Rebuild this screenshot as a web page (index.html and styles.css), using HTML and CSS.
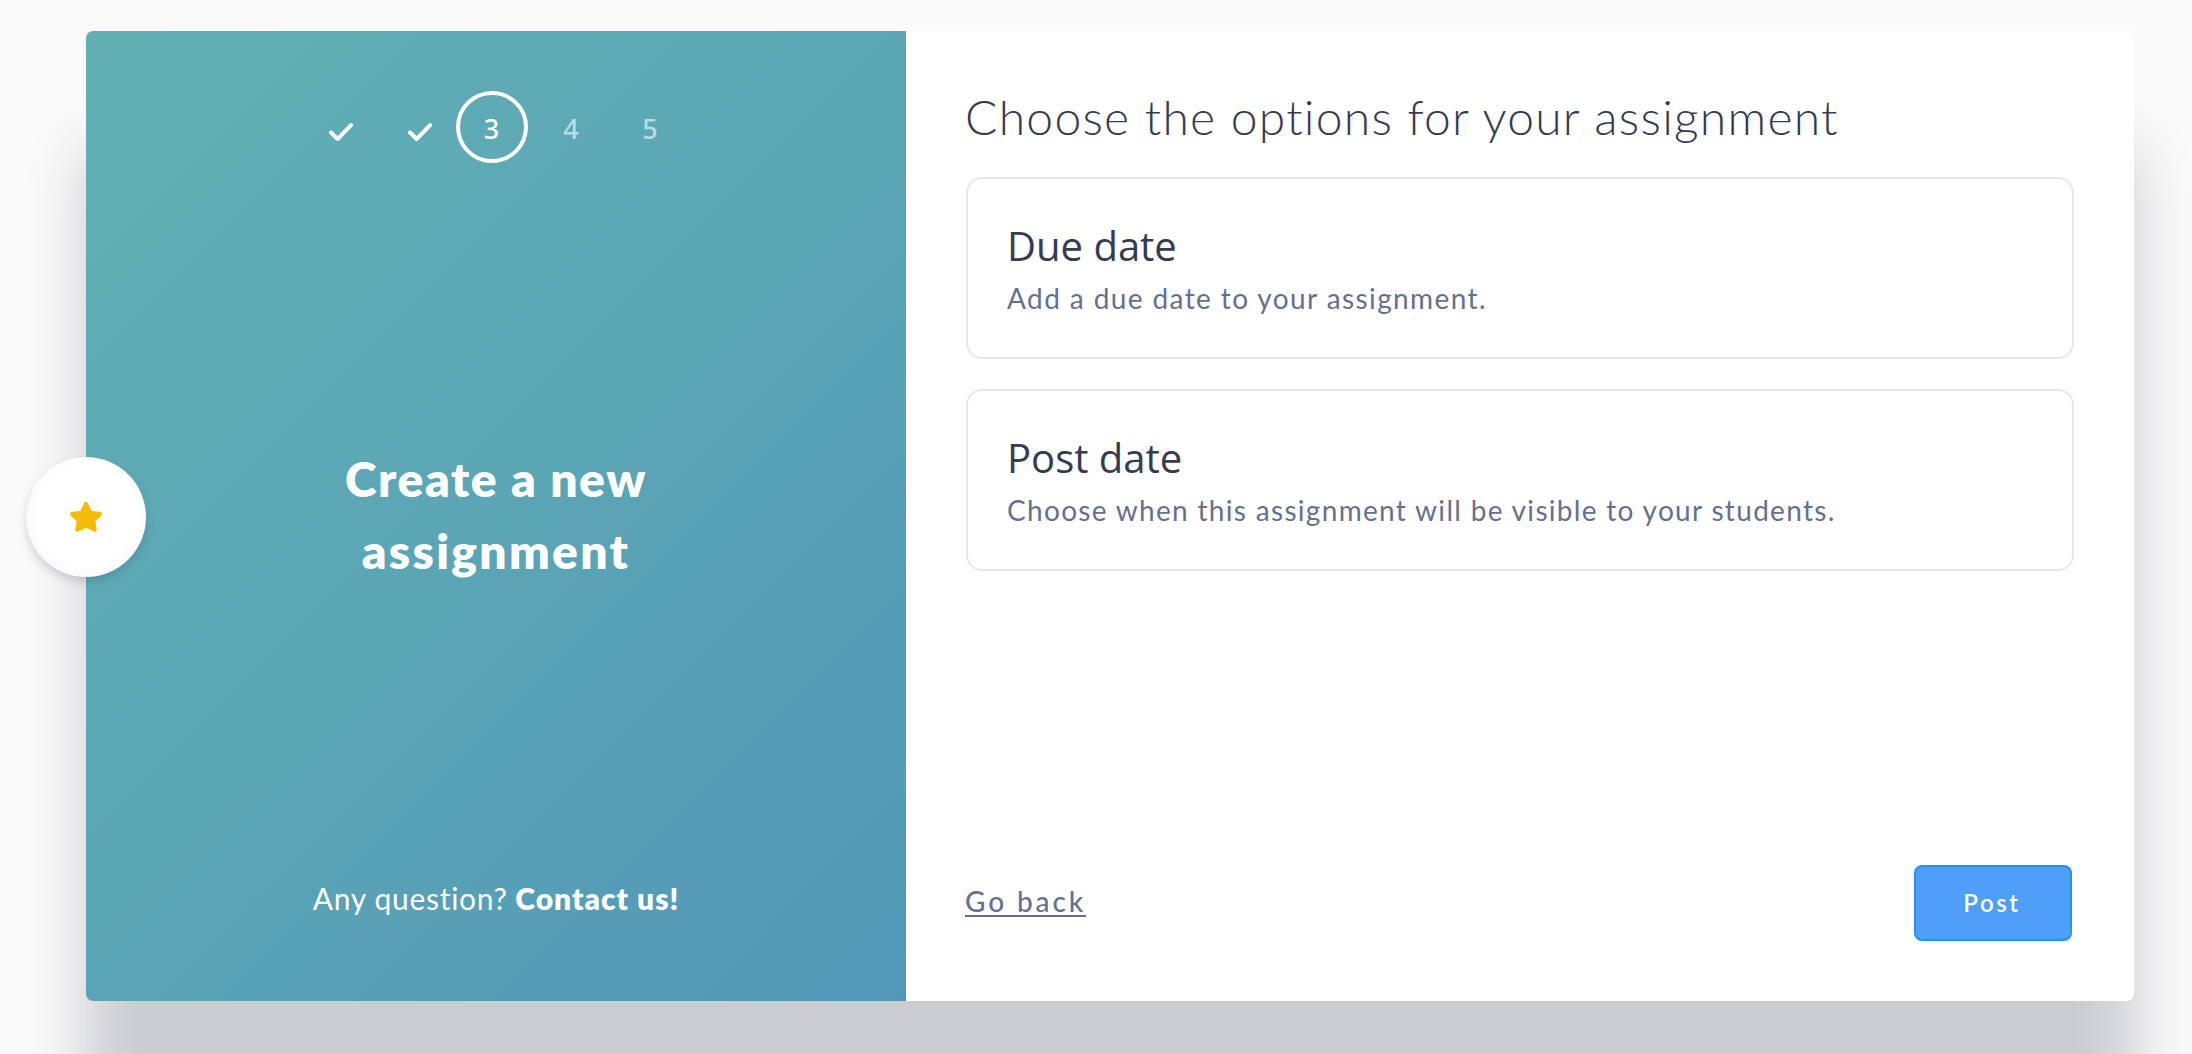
FILE: index.html
```html
<!DOCTYPE html>
<html lang="en">
<head>
<meta charset="utf-8">
<title>Create a new assignment</title>
<link rel="stylesheet" href="styles.css">
</head>
<body>
<main class="modal">
  <aside class="side">
    <ol class="steps">
      <li class="step done"><svg class="check" viewBox="0 0 24 18"><path d="M2 9.5 8.7 16 22 2.2"/></svg></li>
      <li class="step done"><svg class="check" viewBox="0 0 24 18"><path d="M2 9.5 8.7 16 22 2.2"/></svg></li>
      <li class="step current"><span>3</span></li>
      <li class="step todo"><span>4</span></li>
      <li class="step todo"><span>5</span></li>
    </ol>
    <h1 class="side-title"><span class="line line-one">Create a new</span><span class="line line-two">assignment</span></h1>
    <p class="help"><span class="ask">Any question?</span> <strong class="contact">Contact us!</strong></p>
    <div class="badge"><svg class="star" viewBox="0 0 32 30"><path d="M13.9 1.4c.8-1.8 3.400-1.800 4.200 0l3.500 7.600 8.100.8c2 .2 2.900 2.500 1.500 3.900l-5.900 5.600 1.500 8c.3 1.900-1.600 3.200-3.300 2.300L16 25.800l-7.500 3.800c-1.700.9-3.600-.4-3.300-2.300l1.500-8L.8 13.700c-1.400-1.400-.5-3.700 1.500-3.900l8.100-.8z"/></svg></div>
  </aside>
  <section class="content">
    <h2 class="title">Choose the options for your assignment</h2>
    <div class="options">
      <article class="option">
        <h3 class="option-name">Due date</h3>
        <p class="option-text text-due">Add a due date to your assignment.</p>
      </article>
      <article class="option">
        <h3 class="option-name">Post date</h3>
        <p class="option-text text-post">Choose when this assignment will be visible to your students.</p>
      </article>
    </div>
    <footer class="actions">
      <a class="back">Go back</a>
      <button class="post">Post</button>
    </footer>
  </section>
</main>
</body>
</html>
```
FILE: styles.css
```css
* { box-sizing: border-box; margin: 0; padding: 0; }
body {
  height: 1054px;
  overflow: hidden;
  padding: 31px 58px 0 86px;
  background: #fafafa;
  font-family: Lato, sans-serif;
  font-variant-ligatures: none;
  color: #353b51;
}
.modal {
  display: flex;
  height: 970px;
  border-radius: 7px;
  background: #fff;
  box-shadow: 0 120px 60px rgba(37, 41, 64, .22);
}
.side {
  position: relative;
  display: flex;
  flex-direction: column;
  align-items: center;
  justify-content: space-between;
  width: 820px;
  padding: 60px 0 81px;
  border-radius: 7px 0 0 7px;
  background: linear-gradient(135deg, #62b0b4 0%, #5aa4b5 55%, #5197b7 100%);
  color: #fff;
}
.steps { display: flex; list-style: none; padding-right: 8px; }
.step {
  display: flex;
  align-items: center;
  justify-content: center;
  width: 79px;
  height: 72px;
  font: 500 27px/36px "Noto Sans", sans-serif;
}
.step span { padding: 4px 1px 0 0; }
.done { padding: 10px 0 0 14px; }
.current { width: 72px; margin: 0 4px; border: 4px solid #fff; border-radius: 50%; }
.todo { color: rgba(255, 255, 255, .6); }
.check { width: 24px; height: 18px; fill: none; stroke: #fff; stroke-width: 4; stroke-linecap: round; stroke-linejoin: round; }
.side-title { margin-top: -9px; font-size: 48px; line-height: 72px; font-weight: 800; text-align: center; }
.line { display: block; }
.line-one { letter-spacing: 1.6px; }
.line-two { letter-spacing: 2.3px; }
.help { font-size: 30px; line-height: 44px; }
.ask { letter-spacing: .7px; }
.contact { font-weight: 800; letter-spacing: 1px; }
.badge {
  position: absolute;
  left: -60px;
  top: 426px;
  display: flex;
  align-items: center;
  justify-content: center;
  width: 120px;
  height: 120px;
  border-radius: 50%;
  background: #fff;
  box-shadow: 0 5px 10px rgba(50, 60, 93, .2), inset 0 -2px 12px rgba(50, 60, 93, .06);
}
.star { width: 32px; height: 30px; fill: #f6bb07; }
.content { flex: 1; display: flex; flex-direction: column; padding: 56px 60px 60px; }
.title { margin-left: -1px; font-size: 48px; line-height: 60px; font-weight: 300; letter-spacing: 1.26px; white-space: nowrap; }
.options { display: grid; gap: 30px; margin-top: 30px; }
.option {
  height: 182px;
  padding: 39px 39px 0;
  border: 2px solid #e6e7eb;
  border-radius: 16px;
}
.option-name { font: 400 40px/56px "Open Sans", sans-serif; }
.option-text { margin-top: 3px; font-size: 28px; line-height: 42px; color: #657091; white-space: nowrap; }
.text-due { letter-spacing: 1.4px; }
.text-post { letter-spacing: 1.31px; }
.actions { display: flex; align-items: center; justify-content: space-between; margin-top: auto; padding-right: 2px; }
.back { margin: -5px 0 0 -1px; font-size: 28px; font-weight: 500; letter-spacing: 2.9px; color: #657091; text-decoration: underline; text-underline-offset: 3px; text-decoration-thickness: 2px; }
.post {
  width: 158px;
  height: 76px;
  padding: 0 2px 2px 0;
  border: 2px solid #2490f8;
  border-radius: 8px;
  background: #4d9ff8;
  color: #fff;
  font: 600 24px Lato, sans-serif;
  letter-spacing: 2.6px;
}
```
